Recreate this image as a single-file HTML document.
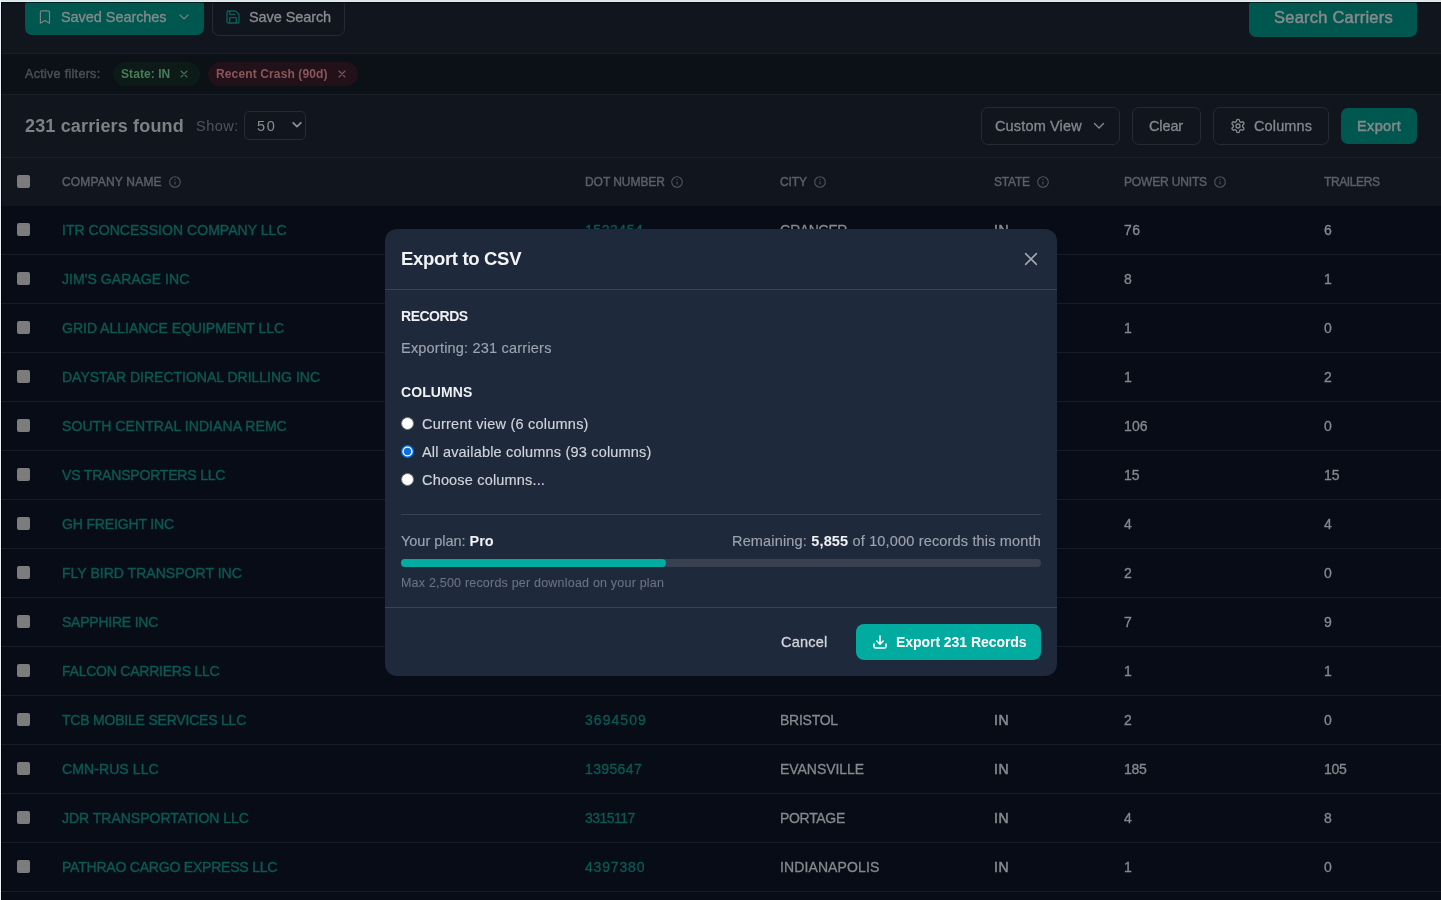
<!DOCTYPE html>
<html><head><meta charset="utf-8"><title>Export to CSV</title>
<style>
*{box-sizing:border-box;margin:0;padding:0}
html,body{width:1441px;height:900px;overflow:hidden;background:#dfe6ea;font-family:"Liberation Sans", sans-serif}
.b{position:absolute}
.t{position:absolute;white-space:nowrap;will-change:transform}
#app{position:absolute;left:0;top:0;width:1441px;height:900px;overflow:hidden}
#modal{position:absolute;left:385px;top:229px;width:672px;height:447px;background:#1e293b;border-radius:12px;overflow:hidden}
#strip{position:absolute;left:0;top:0;width:1441px;height:2px;background:linear-gradient(#d8e5e9 0 1px,#e5eef0 1px 2px)}
#dline{position:absolute;left:1px;top:2px;width:1440px;height:1px;background:rgba(0,0,0,0.6)}
#dlinel{position:absolute;left:1px;top:2px;width:1px;height:898px;background:rgba(0,0,0,0.6)}
#lstrip{position:absolute;left:0;top:0;width:1px;height:900px;background:#eaf3f5}
</style></head><body>
<div id="app"><div class="b" style="left:1px;top:2px;width:1440px;height:898px;background:#11151d"></div><div class="b" style="left:25px;top:-2px;width:179px;height:37px;background:#00574f;border-radius:7px"></div><svg class="b" style="left:39px;top:10px" width="12" height="15" viewBox="0 0 12 15"><path d="M1.4 13.2 V2.3 Q1.4 0.8 2.9 0.8 H9 Q10.5 0.8 10.5 2.3 V13.2 L5.95 10.4 Z" fill="none" stroke="#7c8181" stroke-width="1.2" stroke-linejoin="round"/></svg><svg class="b" style="left:178px;top:13px" width="12" height="8" viewBox="0 0 12 8"><path d="M1.9 1.9 L6 5.9 L10.1 1.9" fill="none" stroke="#7c8181" stroke-width="1.3" stroke-linecap="round" stroke-linejoin="round"/></svg><div class="b" style="left:212px;top:-2px;width:133px;height:38px;border:1px solid #262a33;border-radius:7px"></div><svg class="b" style="left:225px;top:9px" width="16" height="16" viewBox="0 0 24 24"><path d="M15.2 3a2 2 0 0 1 1.4.6l3.8 3.8a2 2 0 0 1 .6 1.4V19a2 2 0 0 1-2 2H5a2 2 0 0 1-2-2V5a2 2 0 0 1 2-2z M17 21v-7a1 1 0 0 0-1-1H8a1 1 0 0 0-1 1v7 M7 3v4a1 1 0 0 0 1 1h7" fill="none" stroke="#0b5e56" stroke-width="2" stroke-linecap="round" stroke-linejoin="round"/></svg><div class="b" style="left:1249px;top:-2px;width:168px;height:39px;background:#00574f;border-radius:7px"></div><div class="b" style="left:1px;top:53px;width:1440px;height:1px;background:#1b1f28"></div><div class="b" style="left:1px;top:54px;width:1440px;height:40px;background:#0c1017"></div><div class="b" style="left:113px;top:62px;width:87px;height:24px;background:#0c1b17;border-radius:12px"></div><svg class="b" style="left:180px;top:70px" width="8" height="8" viewBox="0 0 8 8"><path d="M1 1 L7 7 M7 1 L1 7" stroke="#467654" stroke-width="1.1" stroke-linecap="round"/></svg><div class="b" style="left:208px;top:62px;width:150px;height:24px;background:#221118;border-radius:12px"></div><svg class="b" style="left:338px;top:70px" width="8" height="8" viewBox="0 0 8 8"><path d="M1 1 L7 7 M7 1 L1 7" stroke="#84545a" stroke-width="1.1" stroke-linecap="round"/></svg><div class="b" style="left:1px;top:94px;width:1440px;height:1px;background:#1b1f28"></div><div class="b" style="left:244px;top:111px;width:62px;height:29px;border:1px solid #272b33;border-radius:5px"></div><svg class="b" style="left:292px;top:121px" width="10" height="8" viewBox="0 0 10 8"><path d="M1.2 1.8 L5 5.6 L8.8 1.8" fill="none" stroke="#8a8d91" stroke-width="1.8" stroke-linecap="round" stroke-linejoin="round"/></svg><div class="b" style="left:981px;top:107px;width:139px;height:38px;border:1px solid #262a33;border-radius:7px"></div><svg class="b" style="left:1093px;top:122px" width="12" height="8" viewBox="0 0 12 8"><path d="M1.5 1.5 L6 6 L10.5 1.5" fill="none" stroke="#85888d" stroke-width="1.4" stroke-linecap="round" stroke-linejoin="round"/></svg><div class="b" style="left:1132px;top:107px;width:69px;height:38px;border:1px solid #262a33;border-radius:7px"></div><div class="b" style="left:1213px;top:107px;width:116px;height:38px;border:1px solid #262a33;border-radius:7px"></div><svg class="b" style="left:1230px;top:118px" width="16" height="16" viewBox="0 0 24 24"><path d="M12.22 2h-.44a2 2 0 0 0-2 2v.18a2 2 0 0 1-1 1.730l-.43.25a2 2 0 0 1-2 0l-.15-.08a2 2 0 0 0-2.73.73l-.22.38a2 2 0 0 0 .73 2.73l.15.1a2 2 0 0 1 1 1.72v.51a2 2 0 0 1-1 1.74l-.15.09a2 2 0 0 0-.73 2.73l.22.38a2 2 0 0 0 2.730.73l.15-.08a2 2 0 0 1 2 0l.43.25a2 2 0 0 1 1 1.73V20a2 2 0 0 0 2 2h.44a2 2 0 0 0 2-2v-.18a2 2 0 0 1 1-1.73l.43-.25a2 2 0 0 1 2 0l.15.08a2 2 0 0 0 2.73-.73l.22-.39a2 2 0 0 0-.73-2.73l-.15-.08a2 2 0 0 1-1-1.74v-.5a2 2 0 0 1 1-1.74l.15-.09a2 2 0 0 0 .73-2.73l-.22-.38a2 2 0 0 0-2.73-.73l-.15.08a2 2 0 0 1-2 0l-.43-.25a2 2 0 0 1-1-1.73V4a2 2 0 0 0-2-2z M15 12a3 3 0 1 1-6 0 3 3 0 0 1 6 0z" fill="none" stroke="#85888d" stroke-width="2" stroke-linecap="round" stroke-linejoin="round"/></svg><div class="b" style="left:1341px;top:108px;width:76px;height:36px;background:#00574f;border-radius:7px"></div><div class="b" style="left:1px;top:157px;width:1440px;height:1px;background:#1b1f28"></div><div class="b" style="left:1px;top:158px;width:1440px;height:48px;background:#11151e"></div><div class="b" style="left:17px;top:175px;width:13px;height:13px;background:#7c7c7c;border-radius:2px"></div><svg class="b" style="left:169px;top:175.5px" width="12" height="12" viewBox="0 0 12 12"><circle cx="6" cy="6" r="5.3" fill="none" stroke="#4f545c" stroke-width="1.1"/><path d="M6 5.4 V8.6" stroke="#4f545c" stroke-width="1.1"/><circle cx="6" cy="3.6" r="0.7" fill="#4f545c"/></svg><svg class="b" style="left:671px;top:175.5px" width="12" height="12" viewBox="0 0 12 12"><circle cx="6" cy="6" r="5.3" fill="none" stroke="#4f545c" stroke-width="1.1"/><path d="M6 5.4 V8.6" stroke="#4f545c" stroke-width="1.1"/><circle cx="6" cy="3.6" r="0.7" fill="#4f545c"/></svg><svg class="b" style="left:814px;top:175.5px" width="12" height="12" viewBox="0 0 12 12"><circle cx="6" cy="6" r="5.3" fill="none" stroke="#4f545c" stroke-width="1.1"/><path d="M6 5.4 V8.6" stroke="#4f545c" stroke-width="1.1"/><circle cx="6" cy="3.6" r="0.7" fill="#4f545c"/></svg><svg class="b" style="left:1037px;top:175.5px" width="12" height="12" viewBox="0 0 12 12"><circle cx="6" cy="6" r="5.3" fill="none" stroke="#4f545c" stroke-width="1.1"/><path d="M6 5.4 V8.6" stroke="#4f545c" stroke-width="1.1"/><circle cx="6" cy="3.6" r="0.7" fill="#4f545c"/></svg><svg class="b" style="left:1214px;top:175.5px" width="12" height="12" viewBox="0 0 12 12"><circle cx="6" cy="6" r="5.3" fill="none" stroke="#4f545c" stroke-width="1.1"/><path d="M6 5.4 V8.6" stroke="#4f545c" stroke-width="1.1"/><circle cx="6" cy="3.6" r="0.7" fill="#4f545c"/></svg><div class="b" style="left:1px;top:206px;width:1440px;height:48px;background:#080c16"></div><div class="b" style="left:1px;top:254px;width:1440px;height:1px;background:#181c25"></div><div class="b" style="left:17px;top:223px;width:13px;height:13px;background:#7c7c7c;border-radius:2px"></div><div class="b" style="left:1px;top:255px;width:1440px;height:48px;background:#080c16"></div><div class="b" style="left:1px;top:303px;width:1440px;height:1px;background:#181c25"></div><div class="b" style="left:17px;top:272px;width:13px;height:13px;background:#7c7c7c;border-radius:2px"></div><div class="b" style="left:1px;top:304px;width:1440px;height:48px;background:#080c16"></div><div class="b" style="left:1px;top:352px;width:1440px;height:1px;background:#181c25"></div><div class="b" style="left:17px;top:321px;width:13px;height:13px;background:#7c7c7c;border-radius:2px"></div><div class="b" style="left:1px;top:353px;width:1440px;height:48px;background:#080c16"></div><div class="b" style="left:1px;top:401px;width:1440px;height:1px;background:#181c25"></div><div class="b" style="left:17px;top:370px;width:13px;height:13px;background:#7c7c7c;border-radius:2px"></div><div class="b" style="left:1px;top:402px;width:1440px;height:48px;background:#080c16"></div><div class="b" style="left:1px;top:450px;width:1440px;height:1px;background:#181c25"></div><div class="b" style="left:17px;top:419px;width:13px;height:13px;background:#7c7c7c;border-radius:2px"></div><div class="b" style="left:1px;top:451px;width:1440px;height:48px;background:#080c16"></div><div class="b" style="left:1px;top:499px;width:1440px;height:1px;background:#181c25"></div><div class="b" style="left:17px;top:468px;width:13px;height:13px;background:#7c7c7c;border-radius:2px"></div><div class="b" style="left:1px;top:500px;width:1440px;height:48px;background:#080c16"></div><div class="b" style="left:1px;top:548px;width:1440px;height:1px;background:#181c25"></div><div class="b" style="left:17px;top:517px;width:13px;height:13px;background:#7c7c7c;border-radius:2px"></div><div class="b" style="left:1px;top:549px;width:1440px;height:48px;background:#080c16"></div><div class="b" style="left:1px;top:597px;width:1440px;height:1px;background:#181c25"></div><div class="b" style="left:17px;top:566px;width:13px;height:13px;background:#7c7c7c;border-radius:2px"></div><div class="b" style="left:1px;top:598px;width:1440px;height:48px;background:#080c16"></div><div class="b" style="left:1px;top:646px;width:1440px;height:1px;background:#181c25"></div><div class="b" style="left:17px;top:615px;width:13px;height:13px;background:#7c7c7c;border-radius:2px"></div><div class="b" style="left:1px;top:647px;width:1440px;height:48px;background:#080c16"></div><div class="b" style="left:1px;top:695px;width:1440px;height:1px;background:#181c25"></div><div class="b" style="left:17px;top:664px;width:13px;height:13px;background:#7c7c7c;border-radius:2px"></div><div class="b" style="left:1px;top:696px;width:1440px;height:48px;background:#080c16"></div><div class="b" style="left:1px;top:744px;width:1440px;height:1px;background:#181c25"></div><div class="b" style="left:17px;top:713px;width:13px;height:13px;background:#7c7c7c;border-radius:2px"></div><div class="b" style="left:1px;top:745px;width:1440px;height:48px;background:#080c16"></div><div class="b" style="left:1px;top:793px;width:1440px;height:1px;background:#181c25"></div><div class="b" style="left:17px;top:762px;width:13px;height:13px;background:#7c7c7c;border-radius:2px"></div><div class="b" style="left:1px;top:794px;width:1440px;height:48px;background:#080c16"></div><div class="b" style="left:1px;top:842px;width:1440px;height:1px;background:#181c25"></div><div class="b" style="left:17px;top:811px;width:13px;height:13px;background:#7c7c7c;border-radius:2px"></div><div class="b" style="left:1px;top:843px;width:1440px;height:48px;background:#080c16"></div><div class="b" style="left:1px;top:891px;width:1440px;height:1px;background:#181c25"></div><div class="b" style="left:17px;top:860px;width:13px;height:13px;background:#7c7c7c;border-radius:2px"></div><div class="b" style="left:1px;top:892px;width:1440px;height:8px;background:#080c16"></div><div class="t" style="top:7.00px;font-size:14.5px;line-height:20px;font-weight:400;color:#868a8b;letter-spacing:-0.062px;-webkit-text-stroke:0.3px #868a8b;left:61.20px;">Saved Searches</div><div class="t" style="top:7.00px;font-size:14.5px;line-height:20px;font-weight:400;color:#898c90;letter-spacing:-0.090px;-webkit-text-stroke:0.3px #898c90;left:249.20px;">Save Search</div><div class="t" style="top:6.00px;font-size:16.5px;line-height:23px;font-weight:400;color:#868a8a;letter-spacing:0.229px;-webkit-text-stroke:0.5px #868a8a;left:1273.60px;">Search Carriers</div><div class="t" style="top:65.00px;font-size:12.5px;line-height:18px;font-weight:400;color:#4a4e57;letter-spacing:0.307px;-webkit-text-stroke:0.45px #4a4e57;left:25.20px;">Active filters:</div><div class="t" style="top:66.00px;font-size:12px;line-height:17px;font-weight:700;color:#4a7c57;letter-spacing:0.075px;left:121.10px;">State: IN</div><div class="t" style="top:66.00px;font-size:12px;line-height:17px;font-weight:700;color:#8a565b;letter-spacing:0.129px;left:215.90px;">Recent Crash (90d)</div><div class="t" style="top:114.00px;font-size:18px;line-height:25px;font-weight:700;color:#7d8085;letter-spacing:0.153px;left:25.20px;">231 carriers found</div><div class="t" style="top:116.00px;font-size:14.5px;line-height:20px;font-weight:400;color:#50545c;letter-spacing:0.500px;left:195.50px;">Show:</div><div class="t" style="top:116.00px;font-size:14.5px;line-height:20px;font-weight:400;color:#8a8d91;letter-spacing:1.600px;left:257.00px;">50</div><div class="t" style="top:116.00px;font-size:14.5px;line-height:20px;font-weight:400;color:#85888d;letter-spacing:0.150px;-webkit-text-stroke:0.3px #85888d;left:994.90px;">Custom View</div><div class="t" style="top:116.00px;font-size:14.5px;line-height:20px;font-weight:400;color:#85888d;letter-spacing:-0.125px;-webkit-text-stroke:0.3px #85888d;left:1149.40px;">Clear</div><div class="t" style="top:116.00px;font-size:14.5px;line-height:20px;font-weight:400;color:#85888d;letter-spacing:0.133px;-webkit-text-stroke:0.3px #85888d;left:1254.10px;">Columns</div><div class="t" style="top:116.00px;font-size:14.5px;line-height:20px;font-weight:400;color:#848988;letter-spacing:0.360px;-webkit-text-stroke:0.5px #848988;left:1357.20px;">Export</div><div class="t" style="top:174.00px;font-size:12px;line-height:17px;font-weight:400;color:#5a5f67;letter-spacing:0.182px;-webkit-text-stroke:0.45px #5a5f67;left:62.30px;">COMPANY NAME</div><div class="t" style="top:174.00px;font-size:12px;line-height:17px;font-weight:400;color:#5a5f67;letter-spacing:-0.056px;-webkit-text-stroke:0.45px #5a5f67;left:585.40px;">DOT NUMBER</div><div class="t" style="top:174.00px;font-size:12px;line-height:17px;font-weight:400;color:#5a5f67;letter-spacing:-0.100px;-webkit-text-stroke:0.45px #5a5f67;left:780.10px;">CITY</div><div class="t" style="top:174.00px;font-size:12px;line-height:17px;font-weight:400;color:#5a5f67;letter-spacing:-0.225px;-webkit-text-stroke:0.45px #5a5f67;left:994.40px;">STATE</div><div class="t" style="top:174.00px;font-size:12px;line-height:17px;font-weight:400;color:#5a5f67;letter-spacing:-0.160px;-webkit-text-stroke:0.45px #5a5f67;left:1124.10px;">POWER UNITS</div><div class="t" style="top:174.00px;font-size:12px;line-height:17px;font-weight:400;color:#5a5f67;letter-spacing:-0.386px;-webkit-text-stroke:0.45px #5a5f67;left:1324.40px;">TRAILERS</div><div class="t" style="top:220.00px;font-size:14px;line-height:20px;font-weight:400;color:#0b5a53;letter-spacing:0.040px;-webkit-text-stroke:0.4px #0b5a53;left:62.30px;">ITR CONCESSION COMPANY LLC</div><div class="t" style="top:220.00px;font-size:14px;line-height:20px;font-weight:400;color:#0b5a53;letter-spacing:0.550px;-webkit-text-stroke:0.3px #0b5a53;left:584.90px;">1523454</div><div class="t" style="top:220.00px;font-size:14px;line-height:20px;font-weight:400;color:#86898e;letter-spacing:-0.567px;-webkit-text-stroke:0.3px #86898e;left:780.00px;">GRANGER</div><div class="t" style="top:220.00px;font-size:14px;line-height:20px;font-weight:400;color:#86898e;letter-spacing:0.500px;-webkit-text-stroke:0.55px #86898e;left:994.00px;">IN</div><div class="t" style="top:220.00px;font-size:14px;line-height:20px;font-weight:400;color:#86898e;letter-spacing:0.500px;-webkit-text-stroke:0.3px #86898e;left:1124.00px;">76</div><div class="t" style="top:220.00px;font-size:14px;line-height:20px;font-weight:400;color:#86898e;-webkit-text-stroke:0.3px #86898e;left:1324.10px;">6</div><div class="t" style="top:269.00px;font-size:14px;line-height:20px;font-weight:400;color:#0b5a53;letter-spacing:0.067px;-webkit-text-stroke:0.4px #0b5a53;left:62.30px;">JIM'S GARAGE INC</div><div class="t" style="top:269.00px;font-size:14px;line-height:20px;font-weight:400;color:#86898e;-webkit-text-stroke:0.3px #86898e;left:1124.00px;">8</div><div class="t" style="top:269.00px;font-size:14px;line-height:20px;font-weight:400;color:#86898e;-webkit-text-stroke:0.3px #86898e;left:1324.10px;">1</div><div class="t" style="top:318.00px;font-size:14px;line-height:20px;font-weight:400;color:#0b5a53;letter-spacing:-0.004px;-webkit-text-stroke:0.4px #0b5a53;left:62.30px;">GRID ALLIANCE EQUIPMENT LLC</div><div class="t" style="top:318.00px;font-size:14px;line-height:20px;font-weight:400;color:#86898e;-webkit-text-stroke:0.3px #86898e;left:1124.00px;">1</div><div class="t" style="top:318.00px;font-size:14px;line-height:20px;font-weight:400;color:#86898e;-webkit-text-stroke:0.3px #86898e;left:1324.10px;">0</div><div class="t" style="top:367.00px;font-size:14px;line-height:20px;font-weight:400;color:#0b5a53;-webkit-text-stroke:0.4px #0b5a53;left:62.30px;">DAYSTAR DIRECTIONAL DRILLING INC</div><div class="t" style="top:367.00px;font-size:14px;line-height:20px;font-weight:400;color:#86898e;-webkit-text-stroke:0.3px #86898e;left:1124.00px;">1</div><div class="t" style="top:367.00px;font-size:14px;line-height:20px;font-weight:400;color:#86898e;-webkit-text-stroke:0.3px #86898e;left:1324.10px;">2</div><div class="t" style="top:416.00px;font-size:14px;line-height:20px;font-weight:400;color:#0b5a53;letter-spacing:0.080px;-webkit-text-stroke:0.4px #0b5a53;left:62.30px;">SOUTH CENTRAL INDIANA REMC</div><div class="t" style="top:416.00px;font-size:14px;line-height:20px;font-weight:400;color:#86898e;letter-spacing:0.100px;-webkit-text-stroke:0.3px #86898e;left:1124.00px;">106</div><div class="t" style="top:416.00px;font-size:14px;line-height:20px;font-weight:400;color:#86898e;-webkit-text-stroke:0.3px #86898e;left:1324.10px;">0</div><div class="t" style="top:465.00px;font-size:14px;line-height:20px;font-weight:400;color:#0b5a53;letter-spacing:-0.183px;-webkit-text-stroke:0.4px #0b5a53;left:62.30px;">VS TRANSPORTERS LLC</div><div class="t" style="top:465.00px;font-size:14px;line-height:20px;font-weight:400;color:#86898e;-webkit-text-stroke:0.3px #86898e;left:1124.00px;">15</div><div class="t" style="top:465.00px;font-size:14px;line-height:20px;font-weight:400;color:#86898e;-webkit-text-stroke:0.3px #86898e;left:1324.10px;">15</div><div class="t" style="top:514.00px;font-size:14px;line-height:20px;font-weight:400;color:#0b5a53;letter-spacing:-0.154px;-webkit-text-stroke:0.4px #0b5a53;left:62.30px;">GH FREIGHT INC</div><div class="t" style="top:514.00px;font-size:14px;line-height:20px;font-weight:400;color:#86898e;-webkit-text-stroke:0.3px #86898e;left:1124.00px;">4</div><div class="t" style="top:514.00px;font-size:14px;line-height:20px;font-weight:400;color:#86898e;-webkit-text-stroke:0.3px #86898e;left:1324.10px;">4</div><div class="t" style="top:563.00px;font-size:14px;line-height:20px;font-weight:400;color:#0b5a53;letter-spacing:0.029px;-webkit-text-stroke:0.4px #0b5a53;left:62.30px;">FLY BIRD TRANSPORT INC</div><div class="t" style="top:563.00px;font-size:14px;line-height:20px;font-weight:400;color:#86898e;-webkit-text-stroke:0.3px #86898e;left:1124.00px;">2</div><div class="t" style="top:563.00px;font-size:14px;line-height:20px;font-weight:400;color:#86898e;-webkit-text-stroke:0.3px #86898e;left:1324.10px;">0</div><div class="t" style="top:612.00px;font-size:14px;line-height:20px;font-weight:400;color:#0b5a53;letter-spacing:-0.227px;-webkit-text-stroke:0.4px #0b5a53;left:62.30px;">SAPPHIRE INC</div><div class="t" style="top:612.00px;font-size:14px;line-height:20px;font-weight:400;color:#86898e;-webkit-text-stroke:0.3px #86898e;left:1124.00px;">7</div><div class="t" style="top:612.00px;font-size:14px;line-height:20px;font-weight:400;color:#86898e;-webkit-text-stroke:0.3px #86898e;left:1324.10px;">9</div><div class="t" style="top:661.00px;font-size:14px;line-height:20px;font-weight:400;color:#0b5a53;letter-spacing:-0.233px;-webkit-text-stroke:0.4px #0b5a53;left:62.30px;">FALCON CARRIERS LLC</div><div class="t" style="top:661.00px;font-size:14px;line-height:20px;font-weight:400;color:#86898e;-webkit-text-stroke:0.3px #86898e;left:1124.00px;">1</div><div class="t" style="top:661.00px;font-size:14px;line-height:20px;font-weight:400;color:#86898e;-webkit-text-stroke:0.3px #86898e;left:1324.10px;">1</div><div class="t" style="top:710.00px;font-size:14px;line-height:20px;font-weight:400;color:#0b5a53;letter-spacing:-0.205px;-webkit-text-stroke:0.4px #0b5a53;left:62.30px;">TCB MOBILE SERVICES LLC</div><div class="t" style="top:710.00px;font-size:14px;line-height:20px;font-weight:400;color:#0b5a53;letter-spacing:1.050px;-webkit-text-stroke:0.3px #0b5a53;left:584.90px;">3694509</div><div class="t" style="top:710.00px;font-size:14px;line-height:20px;font-weight:400;color:#86898e;letter-spacing:-0.250px;-webkit-text-stroke:0.3px #86898e;left:780.00px;">BRISTOL</div><div class="t" style="top:710.00px;font-size:14px;line-height:20px;font-weight:400;color:#86898e;letter-spacing:0.500px;-webkit-text-stroke:0.55px #86898e;left:994.00px;">IN</div><div class="t" style="top:710.00px;font-size:14px;line-height:20px;font-weight:400;color:#86898e;-webkit-text-stroke:0.3px #86898e;left:1124.00px;">2</div><div class="t" style="top:710.00px;font-size:14px;line-height:20px;font-weight:400;color:#86898e;-webkit-text-stroke:0.3px #86898e;left:1324.10px;">0</div><div class="t" style="top:759.00px;font-size:14px;line-height:20px;font-weight:400;color:#0b5a53;letter-spacing:0.100px;-webkit-text-stroke:0.4px #0b5a53;left:62.30px;">CMN-RUS LLC</div><div class="t" style="top:759.00px;font-size:14px;line-height:20px;font-weight:400;color:#0b5a53;letter-spacing:0.367px;-webkit-text-stroke:0.3px #0b5a53;left:584.90px;">1395647</div><div class="t" style="top:759.00px;font-size:14px;line-height:20px;font-weight:400;color:#86898e;letter-spacing:-0.044px;-webkit-text-stroke:0.3px #86898e;left:780.00px;">EVANSVILLE</div><div class="t" style="top:759.00px;font-size:14px;line-height:20px;font-weight:400;color:#86898e;letter-spacing:0.500px;-webkit-text-stroke:0.55px #86898e;left:994.00px;">IN</div><div class="t" style="top:759.00px;font-size:14px;line-height:20px;font-weight:400;color:#86898e;letter-spacing:-0.300px;-webkit-text-stroke:0.3px #86898e;left:1124.00px;">185</div><div class="t" style="top:759.00px;font-size:14px;line-height:20px;font-weight:400;color:#86898e;letter-spacing:-0.250px;-webkit-text-stroke:0.3px #86898e;left:1324.10px;">105</div><div class="t" style="top:808.00px;font-size:14px;line-height:20px;font-weight:400;color:#0b5a53;letter-spacing:-0.014px;-webkit-text-stroke:0.4px #0b5a53;left:62.30px;">JDR TRANSPORTATION LLC</div><div class="t" style="top:808.00px;font-size:14px;line-height:20px;font-weight:400;color:#0b5a53;letter-spacing:-0.533px;-webkit-text-stroke:0.3px #0b5a53;left:584.90px;">3315117</div><div class="t" style="top:808.00px;font-size:14px;line-height:20px;font-weight:400;color:#86898e;letter-spacing:-0.317px;-webkit-text-stroke:0.3px #86898e;left:780.00px;">PORTAGE</div><div class="t" style="top:808.00px;font-size:14px;line-height:20px;font-weight:400;color:#86898e;letter-spacing:0.500px;-webkit-text-stroke:0.55px #86898e;left:994.00px;">IN</div><div class="t" style="top:808.00px;font-size:14px;line-height:20px;font-weight:400;color:#86898e;-webkit-text-stroke:0.3px #86898e;left:1124.00px;">4</div><div class="t" style="top:808.00px;font-size:14px;line-height:20px;font-weight:400;color:#86898e;-webkit-text-stroke:0.3px #86898e;left:1324.10px;">8</div><div class="t" style="top:857.00px;font-size:14px;line-height:20px;font-weight:400;color:#0b5a53;letter-spacing:-0.208px;-webkit-text-stroke:0.4px #0b5a53;left:62.30px;">PATHRAO CARGO EXPRESS LLC</div><div class="t" style="top:857.00px;font-size:14px;line-height:20px;font-weight:400;color:#0b5a53;letter-spacing:0.833px;-webkit-text-stroke:0.3px #0b5a53;left:584.90px;">4397380</div><div class="t" style="top:857.00px;font-size:14px;line-height:20px;font-weight:400;color:#86898e;letter-spacing:0.109px;-webkit-text-stroke:0.3px #86898e;left:780.00px;">INDIANAPOLIS</div><div class="t" style="top:857.00px;font-size:14px;line-height:20px;font-weight:400;color:#86898e;letter-spacing:0.500px;-webkit-text-stroke:0.55px #86898e;left:994.00px;">IN</div><div class="t" style="top:857.00px;font-size:14px;line-height:20px;font-weight:400;color:#86898e;-webkit-text-stroke:0.3px #86898e;left:1124.00px;">1</div><div class="t" style="top:857.00px;font-size:14px;line-height:20px;font-weight:400;color:#86898e;-webkit-text-stroke:0.3px #86898e;left:1324.10px;">0</div></div>
<div id="modal"><div class="b" style="left:0px;top:60px;width:672px;height:1px;background:#374356"></div><svg class="b" style="left:638px;top:22px" width="16" height="16" viewBox="0 0 16 16"><path d="M2.6 2.6 L13.4 13.4 M13.4 2.6 L2.6 13.4" stroke="#a3a9b3" stroke-width="1.5" stroke-linecap="round"/></svg><svg class="b" style="left:16px;top:188px" width="13" height="13" viewBox="0 0 13 13"><circle cx="6.5" cy="6.5" r="6" fill="#fff" stroke="#767676" stroke-width="1"/></svg><svg class="b" style="left:16px;top:216px" width="13" height="13" viewBox="0 0 13 13"><circle cx="6.5" cy="6.5" r="6.5" fill="#0b6fdc"/><circle cx="6.5" cy="6.5" r="5.1" fill="#fff"/><circle cx="6.5" cy="6.5" r="3.7" fill="#0b6fdc"/></svg><svg class="b" style="left:16px;top:244px" width="13" height="13" viewBox="0 0 13 13"><circle cx="6.5" cy="6.5" r="6" fill="#fff" stroke="#767676" stroke-width="1"/></svg><div class="b" style="left:16px;top:285px;width:640px;height:1px;background:#374356"></div><div class="b" style="left:16px;top:330px;width:640px;height:8px;background:#374151;border-radius:4px"></div><div class="b" style="left:16px;top:330px;width:265px;height:8px;background:#02aca0;border-radius:4px"></div><div class="b" style="left:0px;top:378px;width:672px;height:1px;background:#374356"></div><div class="b" style="left:471px;top:395px;width:185px;height:36px;background:#02ab9f;border-radius:8px"></div><svg class="b" style="left:487px;top:405px" width="16" height="16" viewBox="0 0 16 16"><path d="M2 10 V12.5 Q2 14 3.5 14 H12.5 Q14 14 14 12.5 V10 M8 2 V10 M4.8 7 L8 10.2 L11.2 7" fill="none" stroke="#fff" stroke-width="1.6" stroke-linecap="round" stroke-linejoin="round"/></svg><div class="t" style="top:17.00px;font-size:18.5px;line-height:26px;font-weight:700;color:#f3f4f6;letter-spacing:-0.325px;left:16.40px;">Export to CSV</div><div class="t" style="top:77.00px;font-size:14px;line-height:20px;font-weight:700;color:#eef0f3;letter-spacing:-0.483px;left:16.40px;">RECORDS</div><div class="t" style="top:109.00px;font-size:14.5px;line-height:20px;font-weight:400;color:#9ca3af;letter-spacing:0.205px;-webkit-text-stroke:0.15px #9ca3af;left:16.40px;">Exporting: 231 carriers</div><div class="t" style="top:153.00px;font-size:14px;line-height:20px;font-weight:700;color:#eef0f3;letter-spacing:0.083px;left:16.00px;">COLUMNS</div><div class="t" style="top:185.00px;font-size:14.5px;line-height:20px;font-weight:400;color:#d1d5db;letter-spacing:0.230px;-webkit-text-stroke:0.15px #d1d5db;left:37.30px;">Current view (6 columns)</div><div class="t" style="top:213.00px;font-size:14.5px;line-height:20px;font-weight:400;color:#d1d5db;letter-spacing:0.185px;-webkit-text-stroke:0.15px #d1d5db;left:37.30px;">All available columns (93 columns)</div><div class="t" style="top:241.00px;font-size:14.5px;line-height:20px;font-weight:400;color:#d1d5db;letter-spacing:0.175px;-webkit-text-stroke:0.15px #d1d5db;left:37.30px;">Choose columns...</div><div class="t" style="top:302.00px;font-size:14.5px;line-height:20px;font-weight:400;color:#9ca3af;letter-spacing:-0.023px;-webkit-text-stroke:0.15px #9ca3af;left:16.20px;">Your plan: <b style="color:#f3f4f6">Pro</b></div><div class="t" style="top:302.00px;font-size:14.5px;line-height:20px;font-weight:400;color:#9ca3af;letter-spacing:0.166px;-webkit-text-stroke:0.15px #9ca3af;right:16.23px;">Remaining: <b style="color:#f3f4f6">5,855</b> of 10,000 records this month</div><div class="t" style="top:345.00px;font-size:12.5px;line-height:18px;font-weight:400;color:#6b7280;letter-spacing:0.205px;-webkit-text-stroke:0.1px #6b7280;left:16.00px;">Max 2,500 records per download on your plan</div><div class="t" style="top:403.00px;font-size:14.5px;line-height:20px;font-weight:400;color:#d1d5db;letter-spacing:0.200px;-webkit-text-stroke:0.3px #d1d5db;left:396.20px;">Cancel</div><div class="t" style="top:403.00px;font-size:14px;line-height:20px;font-weight:700;color:#ffffff;letter-spacing:-0.053px;left:510.70px;">Export 231 Records</div></div>
<div id="strip"></div><div id="lstrip"></div><div id="dline"></div><div id="dlinel"></div>
</body></html>
